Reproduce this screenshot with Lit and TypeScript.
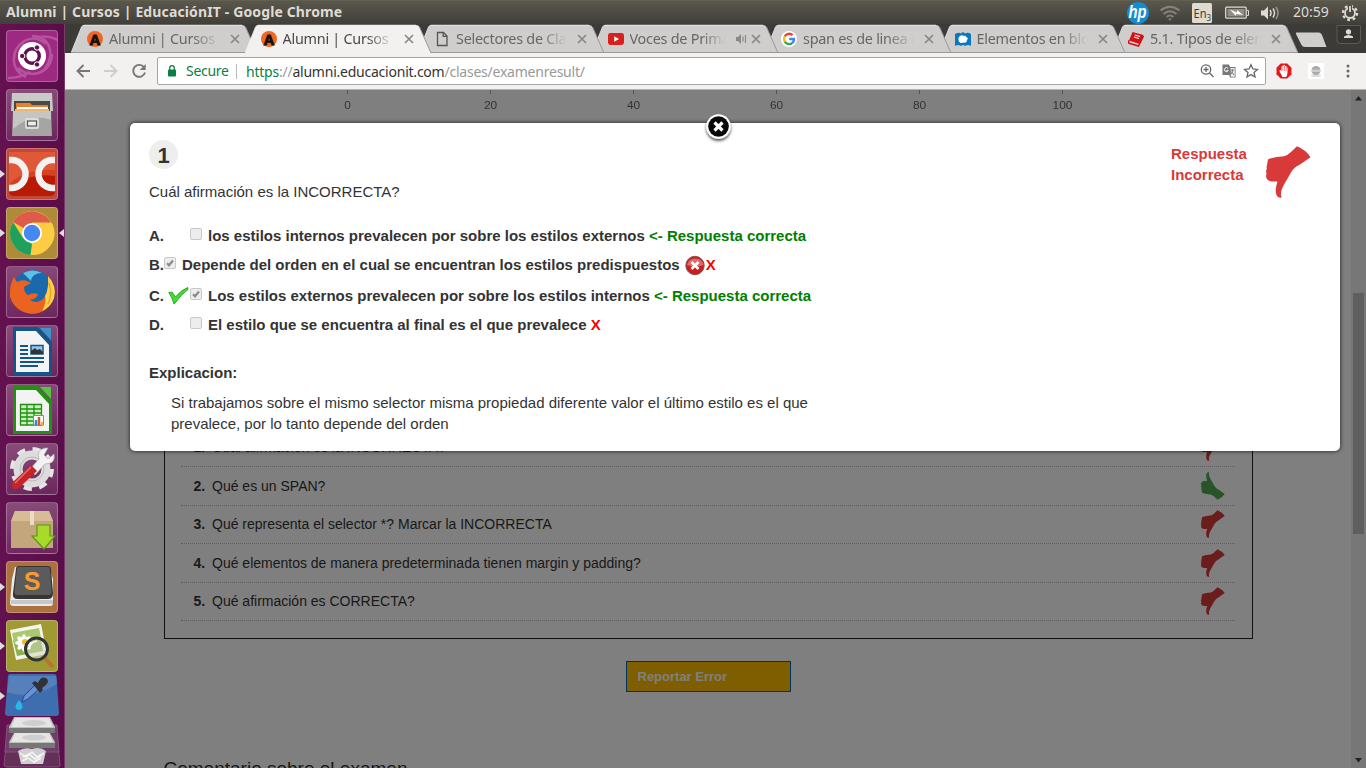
import { LitElement, html, css, svg } from "lit";
import { customElement, property } from "lit/decorators.js";
import { classMap } from "lit/directives/class-map.js";

const favicons: Record<string, unknown> = {
  alumni: svg`<circle cx="8" cy="8" r="8" fill="#f26522"/><text x="8" y="13.5" text-anchor="middle" font-family="Liberation Sans" font-weight="700" font-size="15" stroke="#111" stroke-width=".9" fill="#111">A</text>`,
  doc: svg`<path d="M3.5 1.5H9.5L13 5V14.5H3.5Z M9.2 1.8V5.4H12.8" fill="none" stroke="#555" stroke-width="1.3"/>`,
  youtube: svg`<rect y="2" width="16" height="12" rx="2.4" fill="#d8201f"/><path d="M6.2 5.2L11 8L6.2 10.8Z" fill="#fff"/>`,
  google: svg`<circle cx="8" cy="8" r="8" fill="#fff"/><g fill="none" stroke-width="2.4"><path d="M11.6 4.2A5 5 0 0 0 3.7 5.5" stroke="#ea4335"/><path d="M3.7 5.5A5 5 0 0 0 3.7 10.5" stroke="#fbbc05"/><path d="M3.7 10.5A5 5 0 0 0 11.4 11.8" stroke="#34a853"/><path d="M11.4 11.8A5 5 0 0 0 13 8H8.2" stroke="#4285f4"/></g>`,
  puzzle: svg`<path d="M0 3Q4 1 6 2.5Q8 0 10 2.5Q13 1 16 3V15Q13 13 10 15Q8 13 6 15Q3 13 0 15Z" fill="#0a78bd"/><path d="M3.5 8a3.4 3.4 0 0 1 5.5-3q2-1 2 1q3 1 1 3q0 3-3.500 2.600a3.400 3.400 0 0 1-5-3.600Z" fill="#fff"/>`,
  book: svg`<path d="M4.500 1L15.500 4L11.500 13L1 9.500Z" fill="#d31217"/><path d="M6.800 4L12 5.500M6 6L11 7.500" stroke="#fff" stroke-width="1.100"/><path d="M1 9.500Q-.5 12 2 12.500L10.500 15L15.500 5" fill="none" stroke="#c4141a" stroke-width="1.500"/>`,
};

const launcherArt: Record<string, unknown> = {
  dash: svg`<path d="M8 30C8 12 26 2 40 14M26 6C44 6 50 24 38 40M46 24C46 42 26 50 12 38M20 47C4 40 4 20 18 12M52 10Q40 4 30 8M2 48Q14 48 24 42" fill="none" stroke="#d993c6" stroke-width="2.500" opacity=".4"/><circle cx="26" cy="26" r="14" fill="#fff"/><circle cx="26" cy="26" r="7.300" fill="none" stroke="#5e1250" stroke-width="3.400"/><g fill="#5e1250" stroke="#fff" stroke-width="1"><circle cx="16.200" cy="26" r="2.700"/><circle cx="31" cy="17.500" r="2.700"/><circle cx="31" cy="34.500" r="2.700"/></g>`,
  files: svg`<path d="M6 4H46L47 22H5Z" fill="#c9c9c7"/><path d="M8 12H44V24H8Z" fill="#4a4845"/><path d="M10 14H24L26 16H42V25H10Z" fill="#e9812b"/><path d="M11 18H42V20H11Z" fill="#fff"/><path d="M9 20H43V26H9Z" fill="#f0b46a"/><path d="M7 22H45L46 47H6Z" fill="#a5a5a3"/><path d="M7 22H45V31Q26 24 7 40Z" fill="#c5c5c3"/><rect x="19" y="29" width="14" height="11" rx="2" fill="#ddd"/><rect x="21.500" y="32" width="9" height="5" fill="#eee" stroke="#555" stroke-width="1.200"/>`,
  dc: svg`<rect x="3" y="4" width="46" height="44" rx="5" fill="#d8411f"/><path d="M3 4H49V22Q20 20 3 36Z" fill="#e4684a" opacity=".6"/><path d="M3 42Q22 24 49 28V43Q49 48 44 48H8Q3 48 3 43Z" fill="#b91a06"/><path d="M3 12H5.500A14 14 0 0 1 5.500 40H3M49 12H46.500A14 14 0 0 0 46.500 40H49" fill="none" stroke="#f2f2f2" stroke-width="6.500"/>`,
  chrome: svg`<circle cx="26" cy="26" r="22" fill="#fccd43"/><path d="M26 26L7 15A22 22 0 0 1 45 15.500H26Z" fill="#de5a4b"/><path d="M7 15L17 31L26 37L24.500 48A22 22 0 0 1 7 15Z" fill="#1fa15d"/><path d="M35 31L24.500 48A22 22 0 0 0 46 16H27Z" fill="#fccd43"/><circle cx="26" cy="26" r="10" fill="#fff"/><circle cx="26" cy="26" r="8.200" fill="#4688f1"/>`,
  firefox: svg`<circle cx="27" cy="24" r="20" fill="#1b69ad"/><path d="M17 7Q27 2 36 7Q26 7 25 15Z" fill="#5fc0ea"/><path d="M42 10Q51 20 48 32Q42 47 26 48Q9 46 4 31Q3 19 8 11L11 16Q16 13 21 15L25 17L18 21Q18 27 22 29Q27 26 32 28Q31 33 24 34Q31 39 38 32Q43 24 42 10Z" fill="#ea6320"/><path d="M42 10Q51 20 48 32Q45 41 36 45Q41 36 39 30Q43 24 42 10Z" fill="#fbd148"/><path d="M43 17Q47 28 42 38" fill="none" stroke="#f09c2f" stroke-width="1.500"/>`,
  writer: svg`<path d="M7 2H32L46 17V50H7Z" fill="#145488"/><path d="M34 3H45V15Z" fill="#3f93c6"/><path d="M10 6H30L43 20V47H10Z" fill="#f3f3f3"/><path d="M14 21H22M14 25H22M14 29H22M14 33H38M14 37H38M14 41H32" stroke="#145488" stroke-width="2"/><path d="M25 20.500H37V29H25Z" fill="#8dc8ee" stroke="#145488" stroke-width="1.500"/><path d="M25 29V26L29 23L31 25L34 24L37 27V29Z" fill="#333"/>`,
  calc: svg`<path d="M7 2H32L46 17V50H7Z" fill="#219013"/><path d="M34 3H45V15Z" fill="#58c342"/><path d="M10 6H30L43 20V47H10Z" fill="#f3f3f3"/><path d="M14.500 20.500H35.500V41H14.500Z" fill="#c8f0b8"/><path d="M14.500 20.500H35.500V41H14.500ZM14.500 25H35M14.500 29H35M14.500 33H35M14.500 37H35M21 21V41M28 21V41" stroke="#219013" stroke-width="1.300" fill="none"/><path d="M27.500 31.500H37.500V41H27.500Z" fill="#fff" stroke="#888"/><path d="M30 41V36" stroke="#2d8bd5" stroke-width="2.500"/><path d="M33 41V33" stroke="#d9541e" stroke-width="2.500"/><path d="M36 41V38" stroke="#edbb25" stroke-width="2"/>`,
  tools: svg`<circle cx="26" cy="26" r="19.500" fill="none" stroke="#e5e5e5" stroke-width="5" stroke-dasharray="8 7.300"/><circle cx="26" cy="26" r="14" fill="none" stroke="#dcdcdc" stroke-width="9"/><circle cx="26" cy="26" r="12" fill="none" stroke="#bbb"/><path d="M24 26L33 16Q30 7 39 5L42 5L38 12L42 16L48 11Q50 21 39 21L29 32Z" fill="#f3f3f3" stroke="#aaa" stroke-width=".7"/><path d="M25 22L31 28L13 45Q8 48 6 44Q5 41 8 38Z" fill="#c4252a"/><path d="M25 24L9 40" stroke="#ee6868" stroke-width="1.600"/>`,
  box: svg`<path d="M9 9H43L47 19V46H5V19Z" fill="#c3a67c"/><path d="M9 9H43L47 19H5Z" fill="#d7bd96"/><path d="M24 9H28V23H24Z" fill="#eadbc4"/><path d="M31 23H44V34H49L38 47L26 34H31Z" fill="#a6db2b" stroke="#5d9711" stroke-width="1.200"/>`,
  sublime: svg`<path d="M6 18L9 6H43L47 18V42Q47 45 44 45H8Q4 45 4 42Z" fill="#eaeaea"/><path d="M5 40H47M5 42H47" stroke="#777" stroke-width=".6"/><path d="M10 8Q10 5 13 5H42Q45 5 45 8L47 32Q47 38 42 38H12Q6 38 7 32Z" fill="#363636"/><path d="M11 8Q11 6 13 6H42Q44 6 44 8L45.500 31Q45 34 43 34H11Q8 34 8.500 30Z" fill="#5b5b5b"/><text x="26" y="28.500" text-anchor="middle" font-family="Liberation Sans" font-weight="700" font-size="25" fill="#f89a32">S</text>`,
  viewer: svg`<path d="M4 10L35 4L41 34L10 40Z" fill="#f5f5f0"/><path d="M7 20L34 15L37 31L11 36Z" fill="#8fb14a"/><path d="M6 13L33 8L35 18L8 23Z" fill="#a9c96c"/><g fill="#fff"><ellipse cx="18" cy="23" rx="3" ry="9"/><ellipse cx="18" cy="23" rx="9" ry="3"/><ellipse cx="18" cy="23" rx="3" ry="9" transform="rotate(45 18 23)"/><ellipse cx="18" cy="23" rx="3" ry="9" transform="rotate(-45 18 23)"/></g><circle cx="19" cy="22" r="3" fill="#eebc2a"/><path d="M38 37L46 46" stroke="#b97432" stroke-width="4" stroke-linecap="round"/><circle cx="30.500" cy="29" r="11" fill="#cdd5bd" fill-opacity=".55" stroke="#2e3436" stroke-width="3"/><path d="M23 29Q24 22 31 21" stroke="#fff" stroke-width="1.500" fill="none"/>`,
};

const thumb = svg`<path d="M31 .3Q40 4 44.500 11.300L34 18.500Q27 22 25 26.500L17.500 39.500Q14.500 45 15 49L15.500 51.500Q12 52.500 10.500 49Q8.500 44 11.500 35.500L6 35.500Q1 35 .3 31.500Q-.3 29 .6 28Q-.5 25 .8 23Q.3 20 1.300 18Q1.500 14 2.500 13Q10 10.500 18 10.300Q22 9 25 6Z" fill="currentColor"/>`;

@customElement("system-panel")
export class SystemPanel extends LitElement {
  static styles = css`
    :host { display: flex; height: 24px; justify-content: space-between; align-items: center; box-sizing: border-box; padding: 0 7px 0 6px; background: linear-gradient(#5a574d, #403f3a); border-top: 1px solid #615f50; color: #dfdbd2; font-family: "Noto Sans", "Open Sans", sans-serif; }
    .title { font-weight: 700; font-size: 14px; line-height: 20px; padding-bottom: 2px; white-space: nowrap; letter-spacing: .13px; }
    .tray { display: grid; grid-template-columns: 33px 33px 33px 36px 32px 48px 18px; align-items: center; height: 22px; }
    .clock { font-size: 14px; line-height: 20px; padding-bottom: 2px; letter-spacing: 0; }
    svg { display: block; }
  `;
  render() {
    return html`
      <div class="title">Alumni | Cursos | EducaciónIT - Google Chrome</div>
      <div class="tray">
        <svg width="24" height="22"><circle cx="12" cy="11" r="11" fill="#168ccf"/><text x="2.500" y="16" textLength="18" lengthAdjust="spacingAndGlyphs" font-family="Liberation Sans" font-style="italic" font-weight="700" font-size="18" fill="#fff">hp</text></svg>
        <svg width="22" height="20" fill="none" stroke="#85837b" stroke-width="1.800"><path d="M1.500 7.500Q11 0 20.500 7.500M4.500 11Q11 5.500 17.500 11M7.500 14Q11 11 14.500 14"/><path d="M9 15.500L11 18L13 15.500Z" fill="#85837b" stroke="none"/></svg>
        <svg width="20" height="20"><rect width="20" height="20" rx="1.500" fill="#dfdbd2"/><text x="1.500" y="14.500" font-family="Noto Sans" font-size="13" textLength="13" lengthAdjust="spacingAndGlyphs" fill="#3c3b37">En</text><text x="14.500" y="18" font-family="Noto Sans" font-size="8" fill="#3c3b37">3</text></svg>
        <svg width="24" height="14"><rect x=".7" y="1.200" width="20.500" height="11" rx="1" fill="none" stroke="#dfdbd2" stroke-width="1.300"/><rect x="2.500" y="3" width="17" height="7.500" fill="#918f87"/><path d="M22 4.500H23.500V9.500H22" stroke="#dfdbd2" fill="none"/><path d="M5 3.500L12 6.500L12 4L18 9L11 8L11 10Z" fill="#fff"/></svg>
        <svg width="20" height="18"><path d="M0 6.500H3L7 2.500V15.500L3 11.500H0Z" fill="#dfdbd2"/><g fill="none" stroke="#dfdbd2" stroke-width="1.500"><path d="M9 6Q11 9 9 12M12 4.500Q15 9 12 13.500"/><path d="M15 3Q19 9 15 15" stroke="#97958c"/></g></svg>
        <span class="clock">20:59</span>
        <svg width="18" height="18"><circle cx="9" cy="9" r="7" fill="none" stroke="#dfdbd2" stroke-width="2.400" stroke-dasharray="2.700 2.800"/><circle cx="9" cy="9" r="5" fill="none" stroke="#dfdbd2" stroke-width="1.800"/><path d="M9 1V8" stroke="#4b4942" stroke-width="4"/><path d="M9 2V8" stroke="#dfdbd2" stroke-width="1.800"/></svg>
      </div>`;
  }
}

@customElement("app-launcher")
export class AppLauncher extends LitElement {
  static styles = css`
    :host { display: flex; flex-direction: column; gap: 7px; box-sizing: border-box; width: 65px; height: 744px; padding-top: 6px; background: linear-gradient(90deg, #641150, #590e49 98.400%, #7a3a6b 98.400%); overflow: hidden; }
    .slot { display: grid; grid-template-columns: 6px 52px 7px; align-items: center; flex: none; height: 52px; }
    .tile { box-sizing: border-box; width: 52px; height: 52px; border-radius: 4px; border: 1px solid rgba(255,255,255,.25); background: linear-gradient(rgba(255,255,255,.25), rgba(255,255,255,.1)); overflow: hidden; }
    .tile svg { display: block; margin: -1px; }
    .dash { background: #9d2a80; }
    .dc { background: #c04a3a; }
    .chrome { background: #ae8b38; }
    .sublime { background: #ad703f; }
    .viewer { background: #a09a35; }
    .stack { display: block; flex: none; margin-top: -8px; }
    .arrow { display: block; }
  `;
  render() {
    const items = ["dash", "files", "dc", "chrome", "firefox", "writer", "calc", "tools", "box", "sublime", "viewer"];
    const running = new Set(["dc", "chrome", "sublime", "viewer"]);
    return html`
      ${items.map((name) => html`
        <div class="slot">
          <svg class="arrow" width="6" height="10">${running.has(name) ? svg`<path d="M0 1L5 5L0 9Z" fill="#ddd"/>` : ""}</svg>
          <div class=${classMap({ tile: true, [name]: true })}><svg width="52" height="52">${launcherArt[name]}</svg></div>
          <svg class="arrow" width="7" height="10">${name === "chrome" ? svg`<path d="M6 1L1 5L6 9Z" fill="#ddd"/>` : ""}</svg>
        </div>`)}
      <svg class="stack" width="65" height="97">
        <path d="M7 66L4 93Q4 96 7 96H57Q61 96 60 93L57 66Z" fill="#64305a" stroke="#8a5a80" stroke-width=".8"/>
        <path d="M7 54L5 81H59L57 54Z" fill="#6f3d65" stroke="#8a5a80" stroke-width=".8"/>
        <path d="M18 80Q24 76 32 78Q40 75 46 80L43 93H21Z" fill="#cfcfcf"/><path d="M20 82L26 86L32 81L37 86L44 82M22 90L28 87L34 91L41 87M23 86L29 83L35 88L42 84" stroke="#f6f6f6" stroke-width="1.500" fill="none"/>
        <path d="M14 62H50L55 71V77H9V71Z" fill="#bdbdbd"/><path d="M9 72H55V77H9Z" fill="#777"/><path d="M15 62H49L53 71H11Z" fill="#e5e5e5"/><ellipse cx="34" cy="66.500" rx="12" ry="3" fill="#cfcfcf"/>
        <path d="M14 46H50L55 56V62H9V56Z" fill="#bdbdbd"/><path d="M9 57H55V62H9Z" fill="#777"/><path d="M15 47H49L53 56H11Z" fill="#e5e5e5"/><ellipse cx="34" cy="52" rx="12" ry="3" fill="#cfcfcf"/>
        <path d="M10 3H54Q56 3 56.500 5L59 42Q59 45 56 45H8Q5 45 5 42L8 5Q8 3 10 3Z" fill="#3e6db0"/>
        <path d="M7 21Q30 30 57 13L56 5H9Z" fill="#658dc4" opacity=".6"/>
        <path d="M0 21L5 25L0 29Z" fill="#ddd"/>
        <path d="M22 31L24 25L35 14L39 18L28 28Z" fill="#6b91d5" stroke="#274b93"/><path d="M32 12L35 10L38 12Q41 5 46 7Q50 10 46 14L42 17L43 19L40 22Z" fill="#303235"/><path d="M19 29Q12 38 19 39Q26 38 19 29Z" fill="#25b8ed"/>
      </svg>`;
  }
}

interface TabInfo { title: string; icon: string; active?: boolean; audio?: boolean }

@customElement("browser-tabs")
export class BrowserTabs extends LitElement {
  static styles = css`
    :host { display: flex; height: 29px; background: #3c3b37; padding-left: 6px; font-family: "Noto Sans", "Open Sans", sans-serif; overflow: hidden; }
    .tab { display: grid; grid-template-columns: 186px; flex: none; width: 186px; height: 29px; margin-right: -12.500px; position: relative; z-index: var(--layer); }
    .shape, .row { grid-area: 1 / 1; }
    .row { display: flex; align-items: center; box-sizing: border-box; min-width: 0; padding: 1px 17px 0 16px; height: 29px; }
    .title { flex: 1; min-width: 0; margin-left: 6px; overflow: hidden; white-space: nowrap; font-size: 14.400px; letter-spacing: -.25px; color: #666; line-height: 22px; -webkit-mask-image: linear-gradient(90deg, #000 75%, transparent); mask-image: linear-gradient(90deg, #000 75%, transparent 99%); }
    .active .title { color: #4a4a4a; }
    .close { margin-left: 9px; }
    .audio { margin-left: 9px; }
    .audio + .close { margin-left: 4px; }
    svg { display: block; flex: none; }
    .newtab { margin: 8px 0 0 9px; }
    .user { margin: 1px 0 0 7px; }
  `;
  tabs: TabInfo[] = [
    { title: "Alumni | Cursos |", icon: "alumni" },
    { title: "Alumni | Cursos |", icon: "alumni", active: true },
    { title: "Selectores de Clase", icon: "doc" },
    { title: "Voces de Prima", icon: "youtube", audio: true },
    { title: "span es de linea o", icon: "google" },
    { title: "Elementos en blo", icon: "puzzle" },
    { title: "5.1. Tipos de elem", icon: "book" },
  ];
  render() {
    return html`
      ${this.tabs.map((t, i) => html`
        <div class=${classMap({ tab: true, active: !!t.active })} style="--layer:${t.active ? 20 : 10 - i}">
          <svg class="shape" width="186" height="29">
            <path d="M0 29L10.500 3Q11.500 1 13.500 1H171Q173.500 1 174.500 3L186 29Z" fill=${t.active ? "#f2f1f0" : "#d0cecd"}/>
            <path d="M174.500 3L186 29" stroke="#999" fill="none"/>
            <path d="M0 29L10.500 3Q11.500 1.200 13.500 1.200H171" stroke="#efefee" fill="none" stroke-width=".8"/>
            ${t.active ? "" : svg`<path d="M0 28.500H186" stroke="#999"/>`}
          </svg>
          <div class="row">
            <svg width="16" height="16">${favicons[t.icon]}</svg>
            <div class="title">${t.title}</div>
            ${t.audio ? html`<svg class="audio" width="12" height="12"><path d="M1 4H3L6 1V11L3 8H1Z" fill="#888"/><path d="M8 3.500V8.500M10.500 2V10" stroke="#888" stroke-width="1.200"/></svg>` : ""}
            <svg class="close" width="10" height="10"><path d="M1 1L9 9M9 1L1 9" stroke="#888" stroke-width="1.700"/></svg>
          </div>
        </div>`)}
      <svg class="newtab" width="34" height="16"><path d="M1.500 .5H24Q26 .5 27 3L31.500 15H10Q7.500 15 6.500 13L1 2Q.5 .5 1.500 .5Z" fill="#d0cecd"/></svg>
      <svg class="user" width="26" height="20"><path d="M1 .5V15Q1 18.500 4 18.500H21Q24.500 18.500 24.500 15V.5Z" fill="#363531" stroke="#5d5b54"/><circle cx="12.500" cy="6.800" r="2.600" fill="#dcdad5"/><path d="M8 13V11.500Q12.500 8.500 17 11.500V13Z" fill="#dcdad5"/></svg>`;
  }
}

@customElement("browser-toolbar")
export class BrowserToolbar extends LitElement {
  static styles = css`
    :host { display: flex; align-items: center; box-sizing: border-box; height: 37px; padding-left: 10px; background: #f2f1f0; border-bottom: 1px solid #b6b4b2; font-family: "Noto Sans", "Open Sans", sans-serif; }
    svg { display: block; flex: none; }
    .nav { display: flex; gap: 12px; width: 82px; }
    .omnibox { display: flex; align-items: center; box-sizing: border-box; width: 1109px; height: 28px; border: 1px solid #a8a6a4; border-radius: 2px; background: #fff; padding: 0 6px 0 9px; font-size: 14px; line-height: 22px; white-space: nowrap; }
    .secure { margin-left: 9px; width: 50px; color: #0b8043; letter-spacing: -.3px; }
    .url { flex: 1; border-left: 1px solid #bbb; line-height: 15px; padding-left: 9px; color: #999; letter-spacing: -.23px; }
    .scheme { color: #0b8043; }
    .host { color: #333; }
    .tools { display: flex; gap: 6px; }
    .ext { display: flex; align-items: center; margin-left: 10px; }
    .avatar { margin-left: 16px; }
    .menu { margin-left: 22px; }
  `;
  render() {
    return html`
      <div class="nav">
        <svg width="16" height="16" fill="none" stroke="#777" stroke-width="1.900"><path d="M15 8H2.500M8.500 2L2.500 8L8.500 14"/></svg>
        <svg width="16" height="16" fill="none" stroke="#d0cecd" stroke-width="1.900"><path d="M1 8H13.500M7.500 2L13.500 8L7.500 14"/></svg>
        <svg width="16" height="16"><path d="M13 4.200A6 6 0 1 0 14 9.500" fill="none" stroke="#777" stroke-width="1.900"/><path d="M14.700 1V7H8.700Z" fill="#777"/></svg>
      </div>
      <div class="omnibox">
        <svg width="10" height="14"><rect x="1" y="5.500" width="8" height="7" rx=".8" fill="#0b8043"/><path d="M2.700 6V4A2.300 2.300 0 0 1 7.300 4V6" stroke="#0b8043" fill="none" stroke-width="1.300"/></svg>
        <span class="secure">Secure</span>
        <span class="url"><span class="scheme">https</span>://<span class="host">alumni.educacionit.com</span>/clases/examenresult/</span>
        <div class="tools">
          <svg width="16" height="16" fill="none" stroke="#666" stroke-width="1.300"><circle cx="7" cy="6.500" r="4.700"/><path d="M10.500 10L14.500 14M4.500 6.500H9.500M7 4V9"/></svg>
          <svg width="16" height="16"><path d="M1.500 1.500H8L9 4H14.500V14.500H9L8.300 12H1.500Z" fill="#777"/><path d="M9.500 5H13.700V13.700H10Z" fill="#eee"/><path d="M9.500 7H13M11.500 6.500Q12 10 9.500 11.500M10 8.500L13 12" stroke="#777" fill="none"/><path d="M7 5.500A2 2 0 1 0 7.200 7.500H5.500" stroke="#fff" fill="none"/></svg>
          <svg width="16" height="16"><path d="M8 1.700L9.900 6L14.500 6.400L11 9.500L12 14L8 11.600L4 14L5 9.500L1.500 6.400L6.100 6Z" fill="none" stroke="#666" stroke-width="1.300"/></svg>
        </div>
      </div>
      <div class="ext">
        <svg width="16" height="16"><path d="M4.700 .5H11.300L15.500 4.700V11.300L11.300 15.500H4.700L.5 11.300V4.700Z" fill="#e3191c"/><path d="M5 11Q3.500 9 3.500 7.500Q4.500 6.500 5.500 8V3.500H6.500V2.500H8V2H9V3H10.500V4.500H11.500V10Q11 13 10 14H6.500Z" fill="#fff"/><path d="M6.800 4V8M8.500 3V8M10.200 4V8" stroke="#e3191c" stroke-width=".5"/></svg>
        <svg class="avatar" width="16" height="16"><rect width="16" height="16" fill="#fff"/><ellipse cx="8" cy="12.500" rx="5" ry="1.500" fill="#ddd"/><circle cx="8" cy="7.500" r="4.500" fill="#aaa"/><path d="M4 6.500H12V9H4Z" fill="#ccc"/></svg>
        <svg class="menu" width="4" height="16" fill="#666"><circle cx="2" cy="3" r="1.500"/><circle cx="2" cy="8" r="1.500"/><circle cx="2" cy="13" r="1.500"/></svg>
      </div>`;
  }
}

@customElement("thumb-icon")
export class ThumbIcon extends LitElement {
  @property({ type: Boolean, reflect: true }) up = false;
  static styles = css`
    :host { display: block; width: 24px; height: 28px; color: #d73a39; }
    :host([up]) { color: #50aa50; transform: scaleY(-1); }
    svg { display: block; width: 100%; height: 100%; }
  `;
  render() { return html`<svg viewBox="0 0 45 52" preserveAspectRatio="none">${thumb}</svg>`; }
}

@customElement("exam-page")
export class ExamPage extends LitElement {
  static styles = css`
    :host { display: grid; grid-template-columns: 1fr 15px; height: 678px; overflow: hidden; background: #fff; color: #333; font-family: "Liberation Sans", Arial, sans-serif; }
    .content { overflow: hidden; height: 678px; }
    .axis { display: grid; grid-template-columns: repeat(6, 143px); margin-left: 210.500px; text-align: center; font-size: 11px; color: #666; line-height: 12px; }
    .axis span { display: flex; flex-direction: column; align-items: center; gap: 5px; transform: scaleX(1.080); }
    .axis span::before { content: ""; width: 1px; height: 4px; background: #aaa; }
    .list { box-sizing: border-box; width: 1089px; margin: 289px 0 0 99px; border: 1px solid #222; padding: 27.500px 17px 17px 16px; }
    .item { display: grid; grid-template-columns: 18.500px 1fr 24px; align-items: center; box-sizing: border-box; height: 38.500px; padding: 0 10px 0 12.500px; border-bottom: 1px dotted #bbb; font-size: 14px; }
    .num { font-weight: 700; }
    .report { display: flex; align-items: center; box-sizing: border-box; width: 165px; height: 31px; margin: 22px 0 0 561px; padding-left: 10.500px; border: 1px solid #0067b0; background: #ffbd00; color: #fff; font-weight: 700; font-size: 13px; }
    .comment { margin: 65px 0 0 98.500px; font-size: 19px; line-height: 24px; white-space: nowrap; }
    .scroll { display: flex; flex-direction: column; align-items: center; background: #efefef; }
    .bar { width: 11px; height: 241px; background: #bebebe; margin: 188px 0 218px; }
  `;
  render() {
    const items = ["Cuál afirmación es la INCORRECTA?", "Qué es un SPAN?", "Qué representa el selector *? Marcar la INCORRECTA", "Qué elementos de manera predeterminada tienen margin y padding?", "Qué afirmación es CORRECTA?"];
    return html`
      <div class="content">
        <div class="axis">${[0, 20, 40, 60, 80, 100].map((n) => html`<span>${n}</span>`)}</div>
        <div class="list">
          ${items.map((q, i) => html`<div class="item"><span class="num">${i + 1}.</span><span>${q}</span><thumb-icon ?up=${i === 1}></thumb-icon></div>`)}
        </div>
        <div class="report">Reportar Error</div>
        <div class="comment">Comentario sobre el examen</div>
      </div>
      <div class="scroll">
        <svg width="15" height="15"><path d="M4 10.500L7.500 6L11 10.500Z" fill="#444"/></svg>
        <div class="bar"></div>
        <svg width="15" height="15"><path d="M4 6L7.500 10.500L11 6Z" fill="#444"/></svg>
      </div>`;
  }
}

interface Answer { key: string; text: string; ok: boolean; checked: boolean; mark?: "tick" | "cross" }

@customElement("answer-dialog")
export class AnswerDialog extends LitElement {
  static styles = css`
    :host { display: block; box-sizing: border-box; width: 1210px; height: 328px; padding: 17px 29px 0 19px; border-radius: 5px; background: #fff; box-shadow: 0 0 4px rgba(0,0,0,.8); color: #333; font: 15px/21px "Liberation Sans", Arial, sans-serif; }
    .close { position: absolute; left: 573px; top: -12px; }
    .head { display: flex; justify-content: space-between; height: 41px; }
    .number { width: 29px; height: 29px; border-radius: 50%; background: #eee; font-weight: 700; font-size: 22px; line-height: 31px; text-align: center; }
    .verdict { display: flex; gap: 18px; color: #d73a39; font-weight: 700; }
    .verdict span { width: 77px; margin-top: 3px; }
    .verdict thumb-icon { width: 45px; height: 52px; margin-top: 6px; }
    .answers { margin-top: 19px; font-weight: 700; }
    .answer { display: flex; align-items: center; height: 29px; }
    .key { width: 41px; display: flex; align-items: center; gap: 4px; flex: none; }
    .tight { width: 15px; }
    .third { margin-top: 2px; }
    .text { margin-left: 6px; white-space: pre; }
    .check { margin-bottom: 4px; flex: none; display: block; }
    .good { color: #008000; }
    .bad { color: #f00; }
    .cross { margin: 2px 0 0 5px; }
    h4 { margin: 23px 0 0; font-size: 15px; line-height: 21px; }
    .why { margin: 9px 0 0 22px; width: 660px; }
  `;
  answers: Answer[] = [
    { key: "A.", text: "los estilos internos prevalecen por sobre los estilos externos ", ok: true, checked: false },
    { key: "B.", text: "Depende del orden en el cual se encuentran los estilos predispuestos", ok: false, checked: true, mark: "cross" },
    { key: "C.", text: "Los estilos externos prevalecen por sobre los estilos internos ", ok: true, checked: true, mark: "tick" },
    { key: "D.", text: "El estilo que se encuentra al final es el que prevalece ", ok: false, checked: false },
  ];
  render() {
    return html`
      <svg class="close" width="31" height="34"><defs><filter id="s" x="-30%" y="-30%" width="160%" height="170%"><feDropShadow dx="0" dy="2" stdDeviation="1.500" flood-opacity=".7"/></filter></defs><circle cx="15.500" cy="15.500" r="12.200" fill="#fff" filter="url(#s)"/><circle cx="15.500" cy="15.500" r="10.300" fill="#080808"/><path d="M11.500 11.500L19.500 19.500M19.500 11.500L11.500 19.500" stroke="#fff" stroke-width="3.200"/></svg>
      <div class="head">
        <div class="number">1</div>
        <div class="verdict"><span>Respuesta Incorrecta</span><thumb-icon></thumb-icon></div>
      </div>
      <div>Cuál afirmación es la INCORRECTA?</div>
      <div class="answers">
        ${this.answers.map((a) => html`
          <div class=${classMap({ answer: true, third: a.key === "C." })}>
            <span class=${classMap({ key: true, tight: a.mark === "cross" })}>${a.key}${a.mark === "tick" ? html`<svg width="21" height="18"><path d="M.8 5.500L4 5L7.500 10Q13 3 19.800 .5L20 2.500Q12.500 8 8 15L6 17Q4 10 .8 5.500Z" fill="#3be22a" stroke="#2b8b1f" stroke-width=".8"/></svg>` : ""}</span>
            <svg class="check" width="12" height="12"><rect x=".5" y=".5" width="11" height="11" rx="1.500" fill="#ededed" stroke="#c8c8c8"/>${a.checked ? svg`<path d="M3 6.200L5 8.300L9 3.500" stroke="#8b8b8b" stroke-width="2.200" fill="none"/>` : ""}</svg>
            <span class="text">${a.text}</span>
            ${a.mark === "cross" ? html`<svg class="cross" width="21" height="21"><circle cx="10" cy="10.500" r="9.200" fill="#c9201f" stroke="#8e5252" stroke-width="1"/><path d="M2 10Q10 13 18.500 10A8.500 8.500 0 0 0 2 10Z" fill="#fff" opacity=".35"/><path d="M6.500 7L13.500 14M13.500 7L6.500 14" stroke="#fff" stroke-width="2.600"/></svg>` : ""}
            <span class=${a.ok ? "good" : "bad"}>${a.ok ? "<- Respuesta correcta" : "X"}</span>
          </div>`)}
      </div>
      <h4>Explicacion:</h4>
      <div class="why">Si trabajamos sobre el mismo selector misma propiedad diferente valor el último estilo es el que prevalece, por lo tanto depende del orden</div>`;
  }
}

@customElement("app-root")
export class AppRoot extends LitElement {
  static styles = css`
    :host { display: block; width: 1366px; height: 768px; overflow: hidden; }
    .desktop { display: grid; grid-template-columns: 65px 1301px; height: 744px; }
    .viewport { position: relative; height: 678px; overflow: hidden; }
    .shade { position: absolute; inset: 0; background: rgba(0,0,0,.5); }
    .dialog { position: absolute; left: 65px; top: 33px; }
  `;
  render() {
    return html`
      <system-panel></system-panel>
      <div class="desktop">
        <app-launcher></app-launcher>
        <div>
          <browser-tabs></browser-tabs>
          <browser-toolbar></browser-toolbar>
          <div class="viewport">
            <exam-page></exam-page>
            <div class="shade"></div>
            <answer-dialog class="dialog"></answer-dialog>
          </div>
        </div>
      </div>`;
  }
}
